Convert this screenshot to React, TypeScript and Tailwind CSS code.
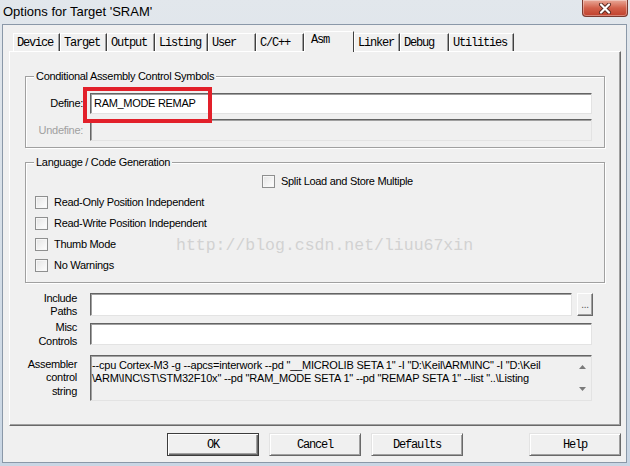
import React from "react";

const tabs = [
  { label: "Device", w: "w-[47px]" },
  { label: "Target", w: "w-[47px]" },
  { label: "Output", w: "w-[48px]" },
  { label: "Listing", w: "w-[53px]" },
  { label: "User", w: "w-[48px]" },
  { label: "C/C++", w: "w-[48px]" },
  { label: "Asm", w: "w-[50px]", active: true },
  { label: "Linker", w: "w-[46px]" },
  { label: "Debug", w: "w-[49px]" },
  { label: "Utilities", w: "w-[65px]" },
];

const options = [
  "Read-Only Position Independent",
  "Read-Write Position Independent",
  "Thumb Mode",
  "No Warnings",
];

const editBox =
  "border border-t-[#646464] border-l-[#646464] border-r-[#e3e3e3] border-b-[#e3e3e3] shadow-[inset_1px_1px_0_#a0a0a0]";

const groupBox =
  "relative border border-[#a0a0a0] shadow-[inset_1px_1px_0_#ffffff,1px_1px_0_#ffffff]";

function CheckBox() {
  return (
    <span className="w-[13px] h-[13px] shrink-0 border border-[#8e8f8f] bg-gradient-to-br from-[#e4e4e4] to-[#ffffff] shadow-[inset_0_0_0_1px_#f7f7f7]" />
  );
}

function Button({ label, isDefault }: { label: string; isDefault?: boolean }) {
  return (
    <button
      className={
        isDefault
          ? "w-[92px] h-[23px] bg-[#f0f0f0] border border-[#3c3c3c] shadow-[inset_1px_1px_0_#ffffff,inset_-1px_-1px_0_#696969,inset_-2px_-2px_0_#a0a0a0] font-['Liberation_Mono',monospace] text-[12px] tracking-[-1.2px] text-black"
          : "w-[92px] h-[23px] bg-[#f0f0f0] border border-t-[#e3e3e3] border-l-[#e3e3e3] border-r-[#696969] border-b-[#696969] shadow-[inset_1px_1px_0_#ffffff,inset_-1px_-1px_0_#a0a0a0] font-['Liberation_Mono',monospace] text-[12px] tracking-[-1.2px] text-black"
      }
    >
      {label}
    </button>
  );
}

export default function App() {
  return (
    <div className="w-[630px] h-[466px] flex flex-col bg-gradient-to-b from-[#e2e7ec] via-[#d6dfe8] to-[#c9d6e4] font-['Liberation_Sans',Arial,sans-serif] text-[11px] tracking-[-0.3px] text-black overflow-hidden">
      {/* title bar */}
      <div className="h-[24px] shrink-0 flex justify-between pl-[3px] pr-[2px]">
        <span className="text-[13px] tracking-normal leading-[24px] text-black">
          Options for Target 'SRAM'
        </span>
        <div className="w-[46px] h-[17px] rounded-b-[4px] border border-t-0 border-[#7a3a30] bg-gradient-to-b from-[#e8a898] via-[#d2604a] to-[#c0402c] flex items-center justify-center shadow-[inset_0_0_0_1px_rgba(255,255,255,0.35)]">
          <svg width="14" height="11" viewBox="0 0 14 11">
            <path d="M3 1.5 L11 9.5 M11 1.5 L3 9.5" stroke="#5a2a22" strokeWidth="4" strokeLinecap="round" />
            <path d="M3 1.5 L11 9.5 M11 1.5 L3 9.5" stroke="#ffffff" strokeWidth="2.2" strokeLinecap="round" />
          </svg>
        </div>
      </div>

      {/* client area */}
      <div className="ml-[2px] mr-[3px] h-[439px] shrink-0 bg-[#f0f0f0] border border-[#8a98a8] flex flex-col pl-[6px] pr-[5px]">
        {/* tabs */}
        <div className="h-[26px] shrink-0 flex items-end pl-[4px] font-['Liberation_Mono',monospace] text-[12px] tracking-[-1.2px]">
          {tabs.map((t) =>
            t.active ? (
              <div
                key={t.label}
                className={`${t.w} h-[21px] -mb-px relative z-10 bg-[#f0f0f0] border-t border-l border-r border-t-white border-l-white border-r-[#404040] pl-[6px] pt-[1px] leading-[14px]`}
              >
                {t.label}
              </div>
            ) : (
              <div
                key={t.label}
                className={`${t.w} h-[18px] bg-[#f0f0f0] border-t border-l border-r border-t-white border-l-white border-r-[#404040] shadow-[inset_-1px_0_0_#a0a0a0] pl-[3px] pt-[2px] leading-[14px]`}
              >
                {t.label}
              </div>
            )
          )}
        </div>

        {/* tab page */}
        <div className="h-[375px] shrink-0 border border-t-white border-l-white border-r-[#696969] border-b-[#696969] shadow-[inset_-1px_-1px_0_#a0a0a0] flex flex-col">
          {/* Conditional Assembly Control Symbols */}
          <div className={`${groupBox} ml-[15px] mt-[24px] w-[580px] h-[72px] pt-[16px] flex flex-col gap-[5px]`}>
            <span className="absolute -top-[8px] left-[8px] px-[2px] bg-[#f0f0f0] leading-[14px]">
              Conditional Assembly Control Symbols
            </span>
            <div className="flex items-center h-[21px]">
              <span className="w-[57px] text-right">Define:</span>
              <div className={`${editBox} ml-[7px] w-[502px] h-[21px] bg-white pl-[3px] flex items-center`}>
                RAM_MODE REMAP
              </div>
            </div>
            <div className="flex items-center h-[22px]">
              <span className="w-[57px] text-right text-[#a0a0a0]">Undefine:</span>
              <div className={`${editBox} ml-[7px] w-[502px] h-[22px] bg-[#f0f0f0]`} />
            </div>
            <div className="absolute left-[57px] top-[10px] w-[129px] h-[36px] border-[4px] border-[#e2202a]" />
          </div>

          {/* Language / Code Generation */}
          <div className={`${groupBox} ml-[15px] mt-[14px] w-[580px] h-[121px] pt-[8px] flex flex-col`}>
            <span className="absolute -top-[8px] left-[8px] px-[2px] bg-[#f0f0f0] leading-[14px]">
              Language / Code Generation
            </span>
            <div className="h-[21px] flex items-center gap-[6px] pl-[236px]">
              <CheckBox />
              <span>Split Load and Store Multiple</span>
            </div>
            {options.map((o) => (
              <div key={o} className="h-[21px] flex items-center gap-[6px] pl-[9px]">
                <CheckBox />
                <span>{o}</span>
              </div>
            ))}
            <span className="absolute left-[150px] top-[73px] font-['Liberation_Mono',monospace] text-[16.5px] tracking-normal leading-[20px] text-[#d2d2d2]">
              http://blog.csdn.net/liuu67xin
            </span>
          </div>

          {/* Include Paths */}
          <div className="mt-[10px] h-[23px] flex items-center">
            <div className="w-[67px] text-right leading-[13px]">
              <div>Include</div>
              <div>Paths</div>
            </div>
            <div className={`${editBox} ml-[13px] w-[482px] h-[23px] bg-white`} />
            <button className="ml-[5px] w-[16px] h-[23px] bg-[#f0f0f0] border border-t-[#ffffff] border-l-[#ffffff] border-r-[#696969] border-b-[#696969] shadow-[inset_-1px_-1px_0_#a0a0a0] text-[10px] leading-[10px] text-[#555] flex items-end justify-center pb-[5px]">
              ...
            </button>
          </div>

          {/* Misc Controls */}
          <div className="mt-[7px] h-[22px] flex items-center">
            <div className="w-[67px] text-right leading-[14px]">
              <div>Misc</div>
              <div>Controls</div>
            </div>
            <div className={`${editBox} ml-[13px] w-[502px] h-[22px] bg-white`} />
          </div>

          {/* Assembler control string */}
          <div className="mt-[10px] h-[46px] flex items-center">
            <div className="w-[67px] text-right leading-[13.5px]">
              <div>Assembler</div>
              <div>control</div>
              <div>string</div>
            </div>
            <div className={`${editBox} ml-[13px] w-[502px] h-[46px] bg-[#f0f0f0] flex`}>
              <div className="flex-1 pl-[1px] pt-[3px] leading-[13px] tracking-[-0.2px] whitespace-nowrap overflow-hidden">
                <div>{'--cpu Cortex-M3 -g --apcs=interwork --pd "__MICROLIB SETA 1" -I "D:\\Keil\\ARM\\INC" -I "D:\\Keil'}</div>
                <div>{'\\ARM\\INC\\ST\\STM32F10x" --pd "RAM_MODE SETA 1" --pd "REMAP SETA 1" --list "..\\Listing'}</div>
              </div>
              <div className="w-[17px] flex flex-col justify-between items-center py-[9px]">
                <svg width="7" height="4" viewBox="0 0 7 4">
                  <path d="M0 4 L3.5 0 L7 4 Z" fill="#7a7a7a" />
                </svg>
                <svg width="7" height="4" viewBox="0 0 7 4">
                  <path d="M0 0 L3.5 4 L7 0 Z" fill="#7a7a7a" />
                </svg>
              </div>
            </div>
          </div>
        </div>

        {/* dialog buttons */}
        <div className="mt-[7px] h-[23px] flex pl-[158px] gap-[10px]">
          <Button label="OK" isDefault />
          <Button label="Cancel" />
          <Button label="Defaults" />
          <div className="ml-[56px]">
            <Button label="Help" />
          </div>
        </div>
      </div>
    </div>
  );
}
